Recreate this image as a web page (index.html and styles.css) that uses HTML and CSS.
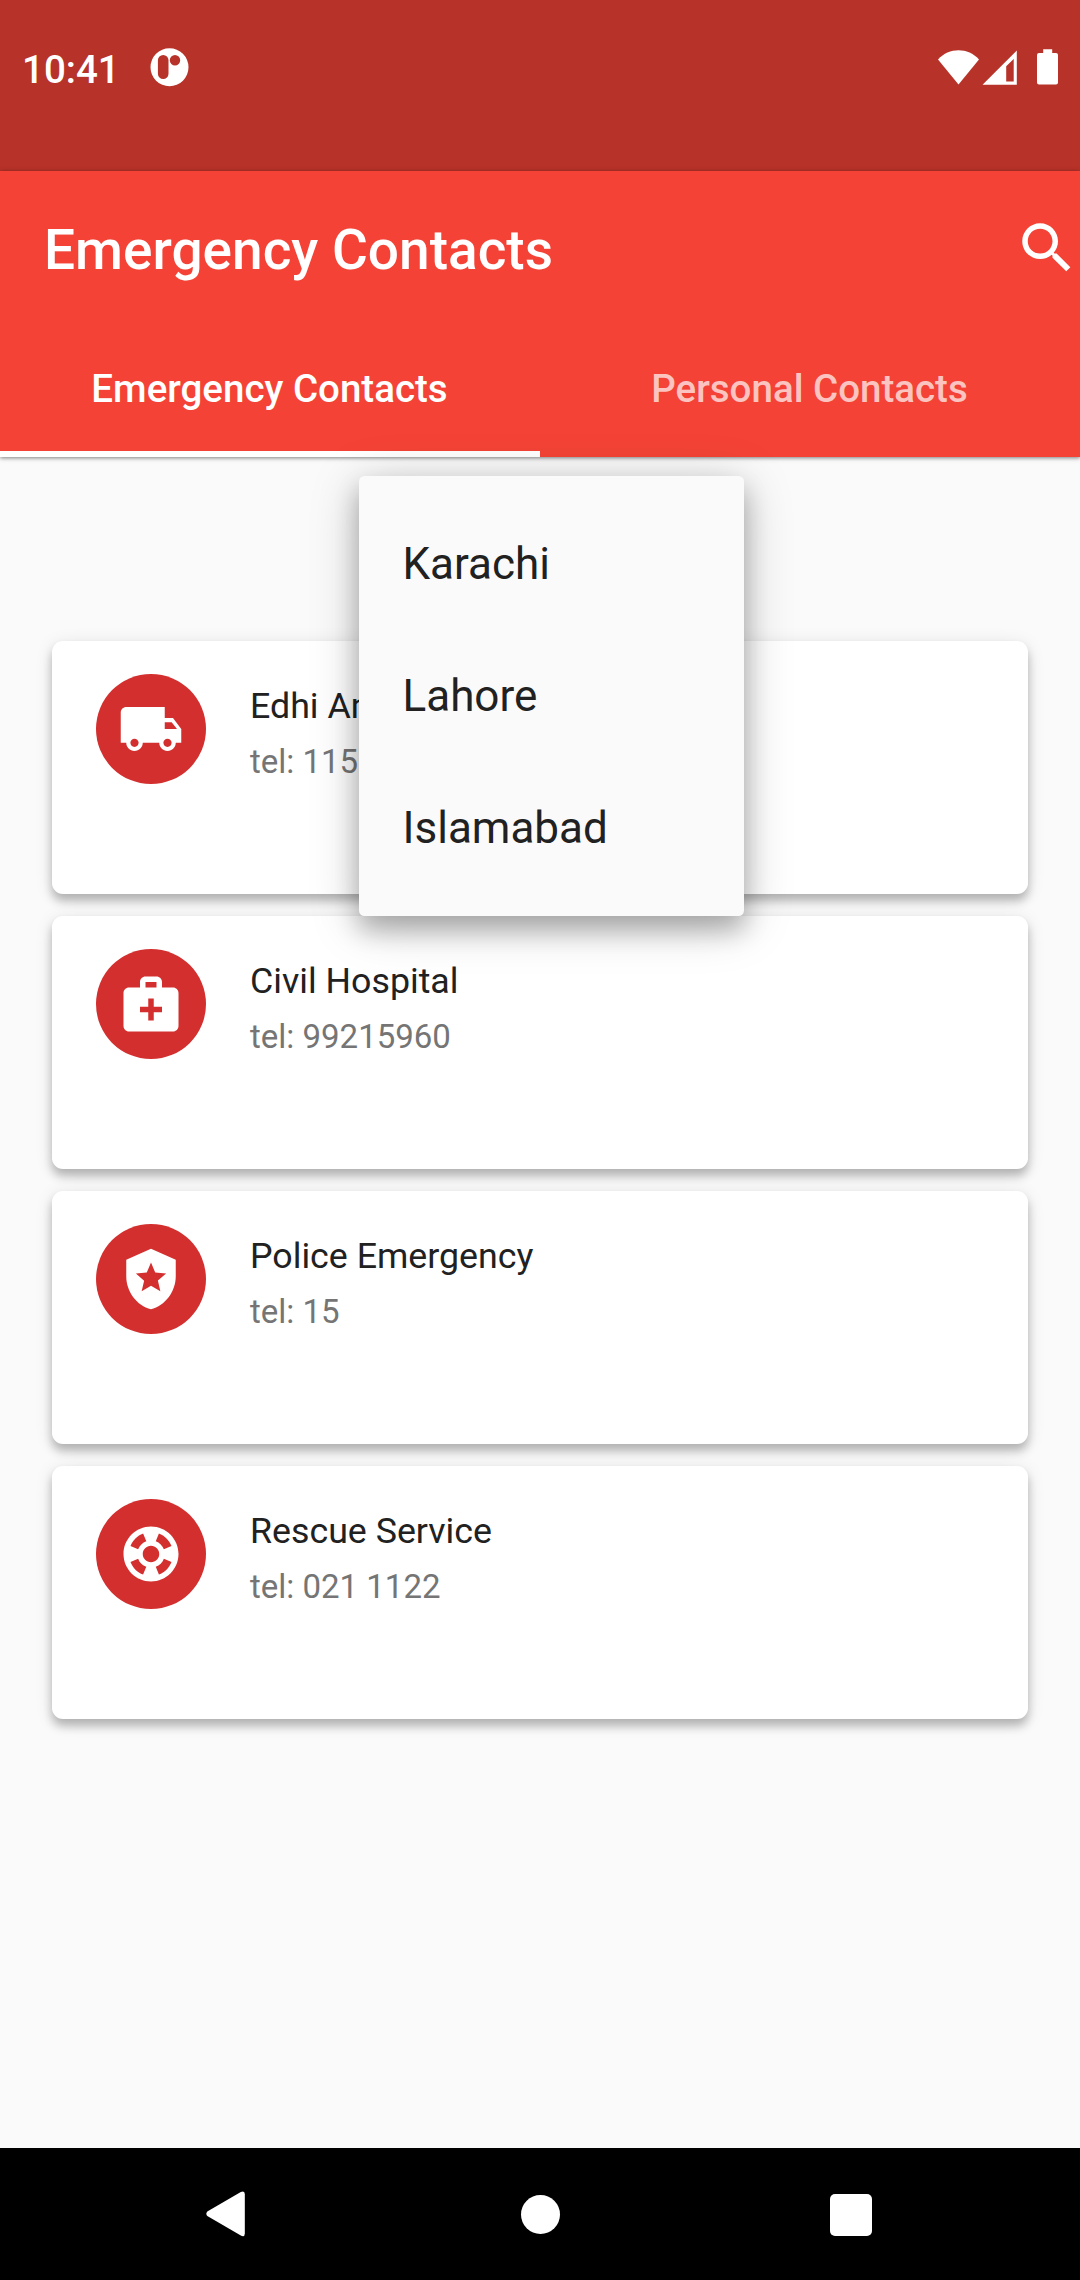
FILE: index.html
```html
<!DOCTYPE html>
<html lang="en">
<head>
<meta charset="utf-8">
<title>Emergency Contacts</title>
<link rel="stylesheet" href="styles.css">
</head>
<body>
<div class="screen">
  <div class="status-bar">
    <span class="clock">10:41</span>
    <svg class="notification" width="40" height="40" viewBox="0 0 40 40"><path fill="#fff" fill-rule="evenodd" d="M20.500 .3a19 19 0 1 1 0 38a19 19 0 1 1 0-38zM14.200 7a5.300 5.300 0 0 0-5.300 5.300v13.400a5.300 5.300 0 0 0 10.600 0V12.300a5.300 5.300 0 0 0-5.300-5.300zM26 7.100a5.200 5.200 0 1 0 0 10.400a5.200 5.200 0 1 0 0-10.400z"/></svg>
    <svg class="system-icons" width="124" height="40" viewBox="0 0 124 40" fill="#fff">
      <path d="M2 11.500C13-.7 32-.7 43 11.500L22.500 36.400z"/>
      <path fill-rule="evenodd" d="M80.800 2.500V36.800H46.500zM77.700 10.900L70.200 18.200V33.500H77.700z"/>
      <path d="M107.200 1.300h9V5H120q2 0 2 2v27.500q0 2-2 2h-17q-2 0-2-2V7q0-2 2-2h4.200z"/>
    </svg>
  </div>

  <header class="app-bar">
    <div class="toolbar">
      <h1 class="title">Emergency Contacts</h1>
      <svg class="search" width="66" height="66" viewBox="0 0 24 24"><path fill="#fff" d="M15.500 14h-.79l-.28-.27C15.410 12.590 16 11.110 16 9.500 16 5.910 13.090 3 9.500 3S3 5.910 3 9.500 5.910 16 9.500 16c1.610 0 3.090-.59 4.230-1.570l.27.28v.79l5 4.990L20.490 19l-4.990-5zm-6 0C7.010 14 5 11.990 5 9.500S7.010 5 9.500 5 14 7.010 14 9.500 11.990 14 9.500 14z"/></svg>
    </div>
    <nav class="tabs">
      <div class="tab active">Emergency Contacts</div>
      <div class="tab">Personal Contacts</div>
    </nav>
  </header>

  <main class="contacts">
    <article class="card">
      <div class="avatar"><svg width="66" height="66" viewBox="0 0 24 24"><path fill="#fff" d="M20 8h-3V4H3c-1.100 0-2 .9-2 2v11h2c0 1.660 1.340 3 3 3s3-1.340 3-3h6c0 1.660 1.340 3 3 3s3-1.340 3-3h2v-5l-3-4zM6 18.500c-.83 0-1.500-.67-1.500-1.500s.67-1.500 1.500-1.500 1.500.67 1.500 1.500-.67 1.500-1.500 1.500zm13.500-9l1.960 2.500H17V9.500h2.500zm-1.500 9c-.83 0-1.500-.67-1.500-1.500s.67-1.500 1.500-1.500 1.500.67 1.500 1.500-.67 1.500-1.500 1.500z"/></svg></div>
      <div class="details"><div class="name">Edhi Ambulance</div><div class="phone">tel: 115</div></div>
    </article>
    <article class="card">
      <div class="avatar"><svg width="66" height="66" viewBox="0 0 24 24"><path fill="#fff" d="M20 6h-4V4c0-1.100-.9-2-2-2h-4c-1.100 0-2 .9-2 2v2H4c-1.100 0-2 .9-2 2v12c0 1.100.9 2 2 2h16c1.100 0 2-.9 2-2V8c0-1.100-.9-2-2-2zM10 4h4v2h-4V4zm6 11h-3v3h-2v-3H8v-2h3v-3h2v3h3v2z"/></svg></div>
      <div class="details"><div class="name">Civil Hospital</div><div class="phone">tel: 99215960</div></div>
    </article>
    <article class="card">
      <div class="avatar"><svg width="66" height="66" viewBox="0 0 24 24"><path fill="#fff" fill-rule="evenodd" d="M12 1L3 5v6c0 5.550 3.840 10.740 9 12c5.160-1.260 9-6.450 9-12V5L12 1zM14.500 12.590l.9 3.880L12 14.420l-3.400 2.050l.9-3.870l-3-2.590l3.960-.34L12 6.020l1.540 3.640L17.500 10L14.500 12.590z"/></svg></div>
      <div class="details"><div class="name">Police Emergency</div><div class="phone">tel: 15</div></div>
    </article>
    <article class="card">
      <div class="avatar"><svg width="66" height="66" viewBox="0 0 24 24"><path fill="#fff" fill-rule="evenodd" d="M12 2C6.480 2 2 6.480 2 12s4.480 10 10 10 10-4.480 10-10S17.520 2 12 2zm7.460 7.120l-2.780 1.150c-.51-1.360-1.580-2.440-2.950-2.940l1.150-2.780c2.100.8 3.770 2.470 4.580 4.570zM12 15c-1.660 0-3-1.340-3-3s1.340-3 3-3 3 1.340 3 3-1.340 3-3 3zM9.130 4.540l1.170 2.780c-1.380.5-2.470 1.590-2.980 2.970L4.540 9.130c.81-2.110 2.480-3.780 4.590-4.590zM4.540 14.870l2.780-1.150c.51 1.380 1.590 2.460 2.970 2.960l-1.170 2.780c-2.100-.81-3.770-2.480-4.580-4.590zm10.340 4.590l-1.150-2.780c1.370-.51 2.450-1.590 2.950-2.970l2.780 1.170c-.81 2.100-2.480 3.770-4.580 4.580z"/></svg></div>
      <div class="details"><div class="name">Rescue Service</div><div class="phone">tel: 021 1122</div></div>
    </article>
  </main>

  <footer class="nav-bar">
    <svg width="40" height="46" viewBox="0 0 40 46"><path fill="#fff" d="M1.300 20.500Q-.6 22.800 1.300 25.100L34.800 44.600Q38.800 46.400 38.800 42.500V3.200Q38.800-.7 34.800 1.100z"/></svg>
    <span class="home"></span>
    <span class="recents"></span>
  </footer>

  <div class="city-menu">
    <div class="option">Karachi</div>
    <div class="option">Lahore</div>
    <div class="option">Islamabad</div>
  </div>
</div>
</body>
</html>
```
FILE: styles.css
```css
* { box-sizing: border-box; }

body {
  margin: 0;
  font-family: Roboto, "Liberation Sans", sans-serif;
  background: #fafafa;
}

svg { display: block; flex: none; }

.screen {
  position: relative;
  display: flex;
  flex-direction: column;
  width: 1080px;
  height: 2280px;
  overflow: hidden;
  background: #fafafa;
}

.status-bar {
  display: flex;
  align-items: flex-start;
  height: 171px;
  padding: 48px 20px 0 22px;
  background: #b73229;
  color: #fff;
}

.clock {
  width: 127px;
  padding-top: 1px;
  font-size: 38.500px;
  font-weight: 500;
  line-height: 42px;
}

.system-icons { margin-left: auto; }

.app-bar {
  height: 286px;
  background: #f44336;
  color: #fff;
  box-shadow: 0 1px 4px rgba(0, 0, 0, .5);
}

.toolbar {
  display: flex;
  align-items: flex-start;
  justify-content: space-between;
  height: 154px;
  padding: 44px 0 0 44px;
}

.search { margin-right: .5px; }

.title {
  margin: 3px 0 0;
  font-size: 55px;
  font-weight: 500;
  line-height: 64px;
}

.tabs {
  display: flex;
  height: 132px;
}

.tab {
  flex: 1;
  padding: 41px 1px 0 0;
  border-bottom: 6px solid transparent;
  color: rgba(255, 255, 255, .7);
  font-size: 38.500px;
  font-weight: 500;
  line-height: 46px;
  text-align: center;
}

.tab.active {
  border-bottom-color: #fff;
  color: #fff;
}

.contacts {
  flex: 1;
  display: flex;
  flex-direction: column;
  gap: 22px;
  padding: 184px 52px 0;
}

.card {
  display: flex;
  gap: 44px;
  height: 253px;
  padding: 33px 44px;
  border-radius: 11px;
  background: #fff;
  box-shadow: 0 7px 10px rgba(0, 0, 0, .24), 0 3px 18px rgba(0, 0, 0, .1);
}

.avatar {
  display: grid;
  place-items: center;
  width: 110px;
  height: 110px;
  border-radius: 50%;
  background: #d32f2f;
}

.details { padding-top: 11px; }

.name {
  color: #212121;
  font-size: 35.750px;
  line-height: 42px;
}

.phone {
  margin-top: 16px;
  color: #757575;
  font-size: 33px;
  line-height: 38px;
}

.nav-bar {
  display: flex;
  align-items: center;
  justify-content: space-between;
  height: 132px;
  padding: 0 208px 0 206px;
  background: #000;
}

.home {
  width: 39px;
  height: 39px;
  margin: 1px 0 0 4px;
  border-radius: 50%;
  background: #fff;
}

.recents {
  width: 42px;
  height: 42px;
  margin-top: 2px;
  border-radius: 5px;
  background: #fff;
}

/* Dropdown floating over the list */
.city-menu {
  position: absolute;
  top: 476px;
  left: 358.500px;
  width: 385px;
  height: 440px;
  padding: 22px 44px;
  border-radius: 5.500px;
  background: #fafafa;
  color: #212121;
  box-shadow: 0 14px 24px rgba(0, 0, 0, .24), 0 8px 50px rgba(0, 0, 0, .22);
}

.option {
  height: 132px;
  font-size: 44px;
  line-height: 132px;
}
```
